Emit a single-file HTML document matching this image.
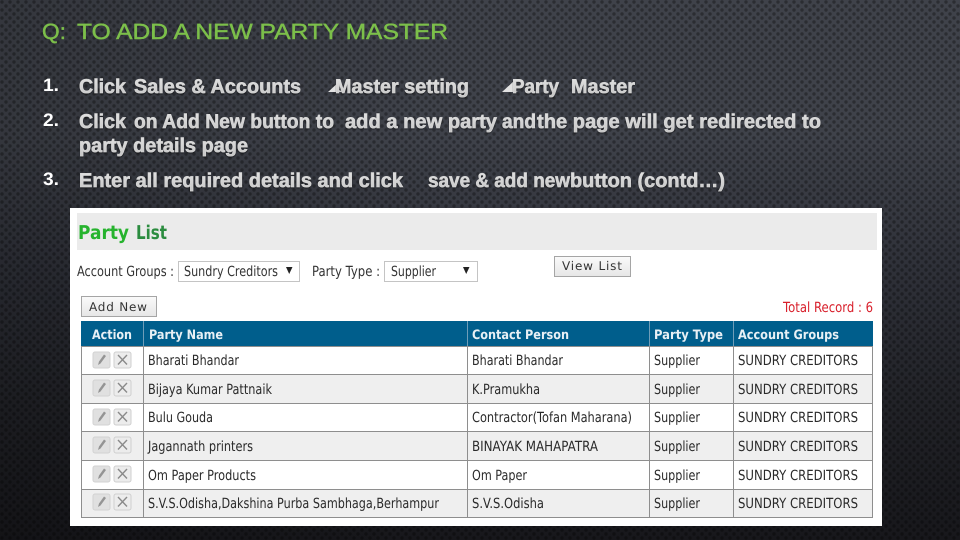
<!DOCTYPE html>
<html><head><meta charset="utf-8"><style>
html,body{margin:0;padding:0;background:#222}
svg{display:block}
.h{font:400 22px "Liberation Sans",sans-serif;fill:#7cbf4a;stroke:#7cbf4a;stroke-width:.45}
.n{font:700 18px "Liberation Sans",sans-serif;fill:#fff}
.b{font:700 20px "Liberation Sans",sans-serif;fill:url(#tg);stroke:#d8d8d8;stroke-width:.55;filter:url(#ds)}
.t{font:400 14px "DejaVu Sans",sans-serif;fill:#2a2a2a}
.m{font:700 13px "DejaVu Sans",sans-serif;fill:#e8f0f5}
.c{font:400 14px "DejaVu Sans",sans-serif;fill:#333}
</style></head><body>
<svg xmlns="http://www.w3.org/2000/svg" width="960" height="540" viewBox="0 0 960 540" text-rendering="geometricPrecision">
<defs>
<linearGradient id="bg" x1="0" y1="0" x2="0" y2="1"><stop offset="0" stop-color="#3f424a"/><stop offset=".25" stop-color="#3f424a"/><stop offset=".5" stop-color="#2e3038"/><stop offset=".75" stop-color="#212227"/><stop offset="1" stop-color="#17171b"/></linearGradient>
<linearGradient id="lr" x1="0" y1="0" x2="1" y2="0"><stop offset="0" stop-color="#000" stop-opacity=".18"/><stop offset=".45" stop-color="#000" stop-opacity="0"/></linearGradient>
<linearGradient id="tg" x1="0" y1="0" x2="0" y2="1"><stop offset="0" stop-color="#e4e4e4"/><stop offset="1" stop-color="#c4c4c4"/></linearGradient>
<pattern id="dots" width="8" height="8" patternUnits="userSpaceOnUse"><circle cx="2" cy="2" r="1.7" fill="#000" opacity=".32"/><circle cx="6" cy="6" r="1.7" fill="#000" opacity=".32"/></pattern>
<filter id="ds" x="-5%" y="-20%" width="110%" height="150%"><feDropShadow dx="0" dy="1" stdDeviation=".5" flood-color="#000" flood-opacity=".5"/></filter>
<linearGradient id="btn" x1="0" y1="0" x2="0" y2="1"><stop offset="0" stop-color="#fafafa"/><stop offset="1" stop-color="#e6e6e6"/></linearGradient>
<g id="ic">
<rect x="0" y="0" width="17" height="16" rx="2" fill="#e0e0e0" stroke="#d2d2d2"/>
<path d="M5 13 L6 9.500 L11 2.500 L13 4 L7.500 11.500 Z" fill="#949494"/>
<rect x="21" y="0" width="17" height="16" rx="2" fill="#ececec" stroke="#cfcfcf"/>
<path d="M25 3 L34 12.500 M34 3 L25 12.500" stroke="#8a8a8a" stroke-width="1.4" fill="none"/>
</g>
</defs>
<rect width="960" height="540" fill="url(#bg)"/>
<rect width="960" height="540" fill="url(#lr)"/>
<rect width="960" height="540" fill="url(#dots)"/>

<text class="h" x="42" y="39" textLength="24" lengthAdjust="spacingAndGlyphs">Q:</text>
<text class="h" x="77" y="39" textLength="371" lengthAdjust="spacingAndGlyphs">TO ADD A NEW PARTY MASTER</text>

<text class="n" x="43" y="91" textLength="16" lengthAdjust="spacingAndGlyphs">1.</text>
<text class="n" x="43" y="126" textLength="16" lengthAdjust="spacingAndGlyphs">2.</text>
<text class="n" x="43" y="185" textLength="16" lengthAdjust="spacingAndGlyphs">3.</text>

<text class="b" x="79" y="93" textLength="47" lengthAdjust="spacingAndGlyphs">Click</text>
<text class="b" x="134" y="93" textLength="167" lengthAdjust="spacingAndGlyphs">Sales &amp; Accounts</text>
<path d="M328 92 L341 80 L339 90 L344 92 Z" fill="#e2e2e2"/>
<text class="b" x="335" y="93" textLength="134" lengthAdjust="spacingAndGlyphs">Master setting</text>
<path d="M502 92 L515 80 L513 90 L518 92 Z" fill="#e2e2e2"/>
<text class="b" x="512" y="93" textLength="47" lengthAdjust="spacingAndGlyphs">Party</text>
<text class="b" x="571" y="93" textLength="64" lengthAdjust="spacingAndGlyphs">Master</text>

<text class="b" x="79" y="128" textLength="47" lengthAdjust="spacingAndGlyphs">Click</text>
<text class="b" x="134" y="128" textLength="200" lengthAdjust="spacingAndGlyphs">on Add New button to</text>
<text class="b" x="345" y="128" textLength="152" lengthAdjust="spacingAndGlyphs">add a new party</text>
<text class="b" x="502" y="128" textLength="34" lengthAdjust="spacingAndGlyphs">and</text>
<text class="b" x="537" y="128" textLength="284" lengthAdjust="spacingAndGlyphs">the page will get redirected to</text>
<text class="b" x="79" y="152" textLength="169" lengthAdjust="spacingAndGlyphs">party details page</text>
<text class="b" x="79" y="187" textLength="324" lengthAdjust="spacingAndGlyphs">Enter all required details and click</text>
<text class="b" x="428" y="187" textLength="142" lengthAdjust="spacingAndGlyphs">save &amp; add new</text>
<text class="b" x="570" y="187" textLength="155" lengthAdjust="spacingAndGlyphs">button (contd…)</text>

<rect x="70" y="208" width="812" height="318" fill="#fff"/>
<rect x="77" y="213" width="800" height="37" fill="#ebebeb"/>
<text x="78" y="239" font-family="DejaVu Sans" font-weight="700" font-size="19" fill="#26b32e" textLength="51" lengthAdjust="spacingAndGlyphs">Party</text>
<text x="136" y="239" font-family="DejaVu Sans" font-weight="700" font-size="19" fill="#2b8c3f" textLength="31" lengthAdjust="spacingAndGlyphs">List</text>

<text class="c" x="77" y="276" textLength="97" lengthAdjust="spacingAndGlyphs">Account Groups :</text>
<rect x="178.500" y="261.500" width="121" height="20" fill="#fff" stroke="#c4c4c4"/>
<text class="c" x="184" y="276" textLength="94" lengthAdjust="spacingAndGlyphs">Sundry Creditors</text>
<path d="M286 267 H292.500 L289.200 274 Z" fill="#222"/>
<text class="c" x="312" y="276" textLength="68" lengthAdjust="spacingAndGlyphs">Party Type :</text>
<rect x="384.500" y="261.500" width="93" height="20" fill="#fff" stroke="#c4c4c4"/>
<text class="c" x="391" y="276" textLength="45" lengthAdjust="spacingAndGlyphs">Supplier</text>
<path d="M463 267 H469.500 L466.200 274 Z" fill="#222"/>

<rect x="554.500" y="256.500" width="76" height="20" fill="url(#btn)" stroke="#a5a5a5"/>
<text x="562" y="270" font-family="DejaVu Sans" font-size="12" fill="#333" textLength="60" lengthAdjust="spacing">View List</text>
<rect x="81.500" y="296.500" width="75" height="20" fill="url(#btn)" stroke="#a5a5a5"/>
<text x="89" y="311" font-family="DejaVu Sans" font-size="12" fill="#333" textLength="58" lengthAdjust="spacing">Add New</text>
<text x="783" y="312" font-family="DejaVu Sans" font-size="14" fill="#d8202c" textLength="90" lengthAdjust="spacingAndGlyphs">Total Record : 6</text>

<rect x="81" y="321" width="792" height="25" fill="#005e8c"/>
<rect x="81" y="375" width="792" height="28" fill="#efefef"/>
<rect x="81" y="432" width="792" height="28" fill="#efefef"/>
<rect x="81" y="489" width="792" height="28" fill="#efefef"/>
<g stroke="#8e8e8e" stroke-width="1" fill="none">
<path d="M81.500 346V517.500H872.500V346 M81 346.500H873 M81 374.500H873 M81 403.500H873 M81 431.500H873 M81 460.500H873 M81 489.500H873"/>
<path d="M143.500 346V517 M467.500 346V517 M649.500 346V517 M733.500 346V517"/>
</g>
<path d="M143.500 321V346 M467.500 321V346 M649.500 321V346 M733.500 321V346" stroke="#6f9db8"/>

<text class="m" x="92" y="339" textLength="40" lengthAdjust="spacingAndGlyphs">Action</text>
<text class="m" x="149" y="339" textLength="74" lengthAdjust="spacingAndGlyphs">Party Name</text>
<text class="m" x="472" y="339" textLength="97" lengthAdjust="spacingAndGlyphs">Contact Person</text>
<text class="m" x="654" y="339" textLength="69" lengthAdjust="spacingAndGlyphs">Party Type</text>
<text class="m" x="738" y="339" textLength="101" lengthAdjust="spacingAndGlyphs">Account Groups</text>

<use href="#ic" x="93" y="352"/>
<use href="#ic" x="93" y="380"/>
<use href="#ic" x="93" y="409"/>
<use href="#ic" x="93" y="437"/>
<use href="#ic" x="93" y="466"/>
<use href="#ic" x="93" y="494"/>

<text class="t" x="148" y="365" textLength="91" lengthAdjust="spacingAndGlyphs">Bharati Bhandar</text>
<text class="t" x="472" y="365" textLength="91" lengthAdjust="spacingAndGlyphs">Bharati Bhandar</text>
<text class="t" x="654" y="365" textLength="46" lengthAdjust="spacingAndGlyphs">Supplier</text>
<text class="t" x="738" y="365" textLength="120" lengthAdjust="spacingAndGlyphs">SUNDRY CREDITORS</text>

<text class="t" x="148" y="394" textLength="124" lengthAdjust="spacingAndGlyphs">Bijaya Kumar Pattnaik</text>
<text class="t" x="472" y="394" textLength="68" lengthAdjust="spacingAndGlyphs">K.Pramukha</text>
<text class="t" x="654" y="394" textLength="46" lengthAdjust="spacingAndGlyphs">Supplier</text>
<text class="t" x="738" y="394" textLength="120" lengthAdjust="spacingAndGlyphs">SUNDRY CREDITORS</text>

<text class="t" x="148" y="422" textLength="65" lengthAdjust="spacingAndGlyphs">Bulu Gouda</text>
<text class="t" x="472" y="422" textLength="160" lengthAdjust="spacingAndGlyphs">Contractor(Tofan Maharana)</text>
<text class="t" x="654" y="422" textLength="46" lengthAdjust="spacingAndGlyphs">Supplier</text>
<text class="t" x="738" y="422" textLength="120" lengthAdjust="spacingAndGlyphs">SUNDRY CREDITORS</text>

<text class="t" x="148" y="451" textLength="105" lengthAdjust="spacingAndGlyphs">Jagannath printers</text>
<text class="t" x="472" y="451" textLength="126" lengthAdjust="spacingAndGlyphs">BINAYAK MAHAPATRA</text>
<text class="t" x="654" y="451" textLength="46" lengthAdjust="spacingAndGlyphs">Supplier</text>
<text class="t" x="738" y="451" textLength="120" lengthAdjust="spacingAndGlyphs">SUNDRY CREDITORS</text>

<text class="t" x="148" y="480" textLength="108" lengthAdjust="spacingAndGlyphs">Om Paper Products</text>
<text class="t" x="472" y="480" textLength="55" lengthAdjust="spacingAndGlyphs">Om Paper</text>
<text class="t" x="654" y="480" textLength="46" lengthAdjust="spacingAndGlyphs">Supplier</text>
<text class="t" x="738" y="480" textLength="120" lengthAdjust="spacingAndGlyphs">SUNDRY CREDITORS</text>

<text class="t" x="148" y="508" textLength="291" lengthAdjust="spacingAndGlyphs">S.V.S.Odisha,Dakshina Purba Sambhaga,Berhampur</text>
<text class="t" x="472" y="508" textLength="72" lengthAdjust="spacingAndGlyphs">S.V.S.Odisha</text>
<text class="t" x="654" y="508" textLength="46" lengthAdjust="spacingAndGlyphs">Supplier</text>
<text class="t" x="738" y="508" textLength="120" lengthAdjust="spacingAndGlyphs">SUNDRY CREDITORS</text>
</svg>
</body></html>
